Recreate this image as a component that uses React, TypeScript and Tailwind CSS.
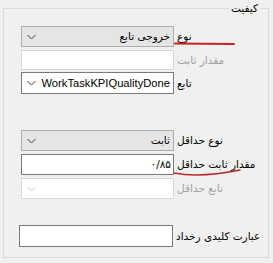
import React from "react";

const fa = "font-['DejaVu_Sans',sans-serif] text-[10.5px] whitespace-nowrap";

function Chevron({ light }: { light?: boolean }) {
  return (
    <svg width="9" height="6" viewBox="0 0 9 6" className="shrink-0">
      <path
        d="M0.5 1 L4.5 5 L8.5 1"
        fill="none"
        stroke={light ? "#c8c8c8" : "#404040"}
        strokeWidth="1"
      />
    </svg>
  );
}

function Combo({
  text,
  variant,
  className,
}: {
  text?: string;
  variant: "gray" | "white" | "disabled";
  className?: string;
}) {
  const box =
    variant === "gray"
      ? "bg-[#e5e5e5] border-[#adadad]"
      : variant === "white"
        ? "bg-white border-[#7a7a7a]"
        : "bg-white border-[#d9d9d9]";
  return (
    <div
      className={`flex w-[153px] items-center justify-between border pl-[5px] pr-[3px] ${box} ${className ?? ""}`}
    >
      <Chevron light={variant === "disabled"} />
      {text ? (
        <span
          dir="auto"
          className={`text-black ${variant === "white" ? "whitespace-nowrap font-['Liberation_Sans',sans-serif] text-[11.2px]" : fa}`}
        >
          {text}
        </span>
      ) : null}
    </div>
  );
}

function Row({
  label,
  disabled,
  children,
  className,
}: {
  label: string;
  disabled?: boolean;
  children: React.ReactNode;
  className?: string;
}) {
  return (
    <div className={`flex items-center gap-[3px] ${className ?? ""}`}>
      {children}
      <span
        dir="rtl"
        className={`${fa} leading-none ${disabled ? "text-[#a0a0a0]" : "text-black"}`}
      >
        {label}
      </span>
    </div>
  );
}

export default function App() {
  return (
    <div className="relative h-[263px] w-[273px] bg-[#f0f0f0] pl-[3px] pt-[8px]">
      {/* گروه کیفیت */}
      <div className="relative h-[250px] w-[266px] border border-[#dcdcdc] pl-[17px] pt-[17px]">
        <span
          dir="rtl"
          className={`absolute right-[8px] top-[-8px] bg-[#f0f0f0] px-[2px] ${fa} text-black`}
        >
          کیفیت
        </span>

        <Row label="نوع" className="h-[21px]">
          <Combo variant="gray" text="خروجی تابع" className="h-[21px]" />
        </Row>
        <Row label="مقدار ثابت" disabled className="mt-[3px] h-[20px]">
          <div className="h-[20px] w-[153px] border border-[#d9d9d9] bg-white" />
        </Row>
        <Row label="تابع" className="mt-[2px] h-[22px]">
          <Combo variant="white" text="WorkTaskKPIQualityDone" className="h-[22px]" />
        </Row>

        <Row label="نوع حداقل" className="mt-[36px] h-[21px]">
          <Combo variant="gray" text="ثابت" className="h-[21px]" />
        </Row>
        <Row label="مقدار ثابت حداقل" className="mt-[3px] h-[21px]">
          <div
            dir="rtl"
            className={`flex h-[21px] w-[153px] items-center border border-[#7a7a7a] bg-white pr-[2px] ${fa} text-black`}
          >
            ۰/۸۵
          </div>
        </Row>
        <Row label="تابع حداقل" disabled className="mt-[3px] h-[21px]">
          <Combo variant="disabled" className="h-[21px]" />
        </Row>

        <Row label="عبارت کلیدی رخداد" className="-ml-[2px] mt-[26px] h-[22px]">
          <div className="h-[22px] w-[154px] border border-[#7a7a7a] bg-white" />
        </Row>
      </div>

      {/* خط قرمز زیر برچسب‌ها */}
      <svg className="pointer-events-none absolute left-0 top-0" width="273" height="263">
        <path d="M175 43.5 L234 44" stroke="#cc2222" strokeWidth="2" strokeLinecap="round" fill="none" />
        <path
          d="M174 173 Q200 178 240 170"
          stroke="#b82a2a"
          strokeWidth="1.5"
          strokeLinecap="round"
          fill="none"
        />
      </svg>
    </div>
  );
}
